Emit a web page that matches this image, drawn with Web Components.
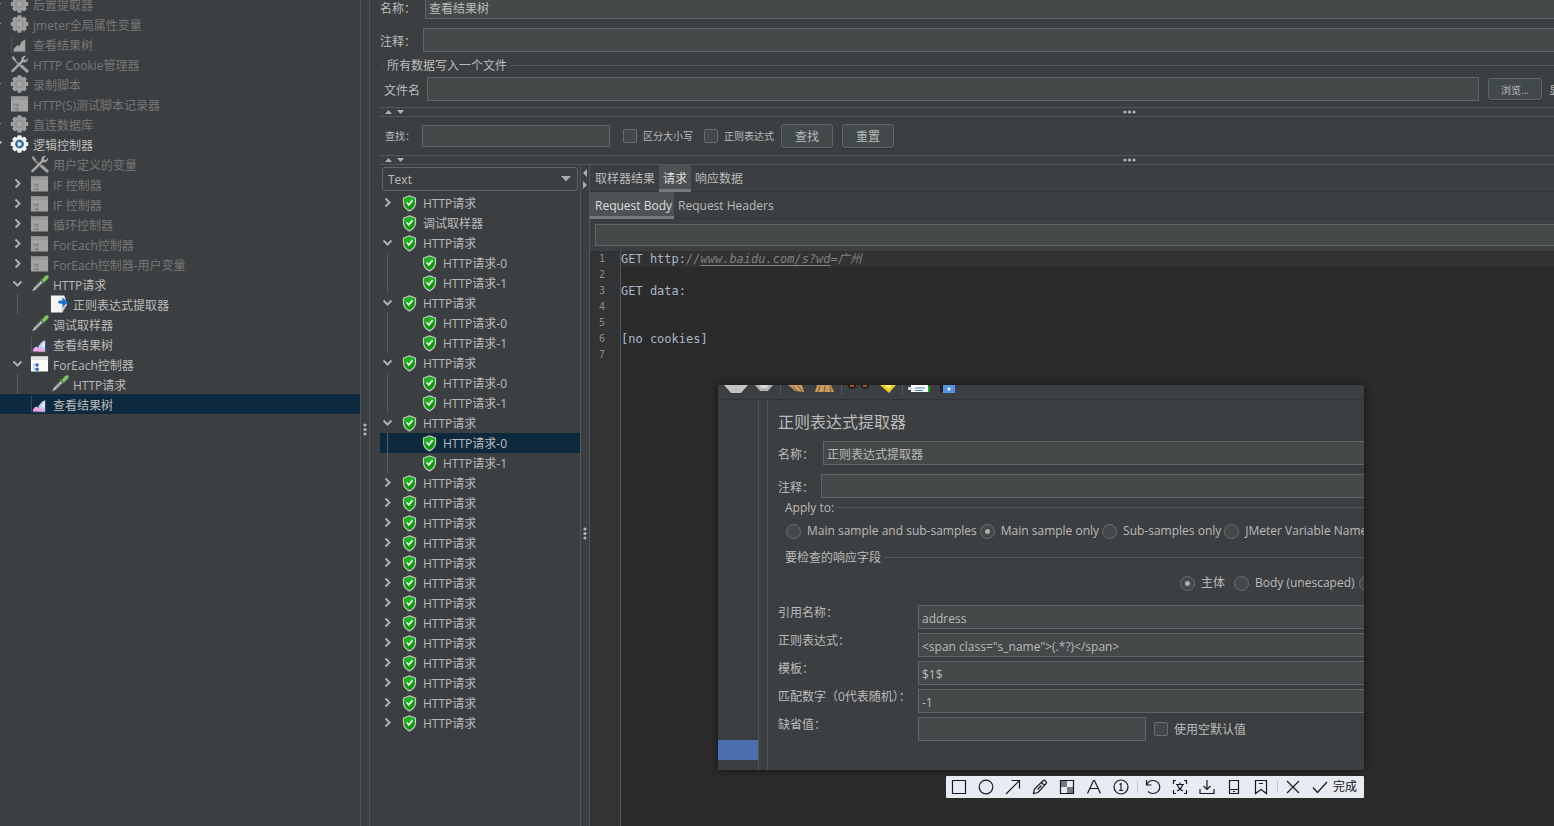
<!DOCTYPE html>
<html lang="zh-CN">
<head>
<meta charset="utf-8">
<title>查看结果树</title>
<style>
  html, body { margin: 0; height: 100%; overflow: hidden; background: #3c3f41; }
  body {
    font: 12px/16px "Open Sans", "Noto Sans CJK SC", sans-serif;
    color: #bbbbbb;
    --field: #45494a; --edge: #646464; --line: #555555; --select: #0d293e;
  }
</style>
</head>
<body>
<jm-app></jm-app>
<script>
const define = (name, render, after) => customElements.define(name, class extends HTMLElement {
  connectedCallback() {
    if (this.shadowRoot) return;
    const tpl = document.createElement('template');
    tpl.innerHTML = '<style>*{box-sizing:border-box}:host{box-sizing:border-box}</style>' + render(this);
    this.attachShadow({ mode: 'open' }).append(tpl.content.cloneNode(true));
    if (after) after(this);
  }
});

/* ---------- tree icons, 20 x 20 ---------- */
const teeth = c => [0, 45, 90, 135].map(a => `<rect x="7.8" y="0.8" width="4.4" height="18.4" rx="1" fill="${c}" transform="rotate(${a} 10 10)"/>`).join('');
const gear = (c, inner, core) => `${teeth(c)}<circle cx="10" cy="10" r="7.6" fill="${c}"/><circle cx="10" cy="10" r="4.6" fill="${inner}"/><circle cx="10" cy="10" r="3" fill="${core}"/>`;
const win = (c, bar, a, b) => `<rect x="1" y="2" width="18" height="16" rx="1" fill="${c}"/><rect x="1" y="2" width="18" height="4" fill="${bar}"/><path d="M4 9v7M4 10.500h3M4 15.500h3" stroke="${a}" fill="none" stroke-width=".8"/><circle cx="7.500" cy="11" r="1.900" fill="${b}"/><circle cx="7.500" cy="15.500" r="1.900" fill="${b}"/>`;
const ICONS = {
  gearOff: gear('#a0a0a0', '#8e8e8e', '#a8a8a8'),
  gear: gear('#eef2f6', '#2e5a96', '#5f8fc9') + '<path d="M8.500 7.500l4 2.500-4 2.500z" fill="#fff"/>',
  chartOff: '<path d="M1.500 2v16.500h16" stroke="#707070" stroke-dasharray="1 1" fill="none"/><path d="M4 18v-3l4-4 2 1 2-4 4-3v13z" fill="#a6a6a6"/>',
  chart: '<path d="M1.500 2v16.500h16" stroke="#70747a" stroke-dasharray="1 1" fill="none"/><path d="M9 12c2-2 3-5 7-6v12H9z" fill="#b8d2f6"/><path d="M12.500 12c1-2 2-3 2.500-4v6z" fill="#f4f8ff"/><path d="M3 18c0-3 2-5 4-5 2 0 2 3 4 2 2-1 4 0 5 3z" fill="#f3a6e4"/>',
  tools: '<path d="M3 4l11 11" stroke="#909090" stroke-width="1.800"/><path d="M1.500 2.500l2-1 3 4-1.500 1.500z" fill="#a0a0a0"/><path d="M12.500 12.500l5.500 5" stroke="#a0a0a0" stroke-width="3.200" stroke-linecap="round"/><path d="M14 6L2.500 17.500" stroke="#a8a8a8" stroke-width="2.500" stroke-linecap="round"/><path d="M17 1.500l-2.500 2.500.5 1.500 1.500.5L19 3.500c.4 3-1.500 5-4 4.800-2-.3-3.300-2-3-4C12.400 2.300 14.500 1 17 1.500z" fill="#a8a8a8"/>',
  winOff: win('#a4a4a4', '#999999', '#858585', '#858585'),
  win: win('#ffffff', '#e4e4e4', '#8aa8cc', '#2f70bd'),
  pipette: '<path d="M2 18l2-4 8-8 2 2-8 8z" fill="#e2e4e4" stroke="#565a5c" stroke-width=".8"/><path d="M5 15l6-6" stroke="#777"/><path d="M10.500 5l4.500 4.500" stroke="#47743c" stroke-width="2"/><path d="M12 6l3-3.500c1.500-1.600 3.600-2 4.300-1.200.8.900.2 2.600-1.300 4L15 8.500z" fill="#7fc364"/>',
  extract: '<path d="M1 1h14l3 9-5 9H1z" fill="#f4f4f4"/><path d="M18 11l-6 8 1-6z" fill="#c4c4c4"/><path d="M8 8c2-2 4-1.500 5-1.500V3l6 5.500-6 5V10c-2 0-3.500 0-5-2z" fill="#1c6fd0"/>',
  shield: '<path d="M10 2.500l6.300 2.500v5c0 4-3 6.500-6.300 8.300C6.700 16.500 3.700 14 3.700 10V5z" fill="#0a9a0a" stroke="#c3ccc3" stroke-width="1.300"/><path d="M10 3.500l5.300 2v4c-4 1-7 1-10.600.500v-4.500z" fill="#1fb31f"/><path d="M7 9.500l2.300 2.500L13.200 7" stroke="#fff" stroke-width="1.700" fill="none"/>'
};

define('jm-tree-row', el => {
  const level = +el.getAttribute('level') || 0, open = el.getAttribute('state');
  let cells = '';
  for (let i = 0; i < level; i++) cells += `<i class="cell">${i === level - 1 && el.hasAttribute('guide') ? '<svg width="15" height="20"><path d="M7.500 0v20" stroke="#5b5e60"/></svg>' : ''}</i>`;
  const chev = open === 'open' ? '<svg width="15" height="20"><path d="M3.500 7.500l4 4 4-4" fill="none" stroke="#adb0b2" stroke-width="2"/></svg>'
    : open === 'closed' ? '<svg width="15" height="20"><path d="M5.500 5.500l4 4-4 4" fill="none" stroke="#adb0b2" stroke-width="2"/></svg>' : '';
  return `<style>
    :host{display:block;height:20px;overflow:hidden}
    :host([selected]){background:var(--select)}
    :host([off]){color:#777777}
    div{display:flex;height:20px;margin-left:var(--tree-shift,0);white-space:nowrap;line-height:var(--tree-line,22px)}
    .cell{flex:0 0 20px}
    .icon{flex:0 0 19px;margin-right:4px}
    svg{display:block}
  </style><div>${cells}<i class="cell">${chev}</i><svg class="icon" width="19" height="20" viewBox="0 0 20 20">${ICONS[el.getAttribute('icon')]}</svg><slot></slot></div>`;
}, el => el.setAttribute('role', 'treeitem'));

const row = (text, icon, level, state = '', extra = '') =>
  `<jm-tree-row icon="${icon}" level="${level}" state="${state}" ${extra}>${text}</jm-tree-row>`;

define('jm-plan-tree', () => `<style>:host{display:block;flex:0 0 360px;overflow:hidden;--tree-shift:-10px;--tree-line:23px}
  .rows{margin-top:-6px}</style><div class="rows" role="tree" aria-label="测试计划">${[
  row('后置提取器', 'gearOff', 0, 'closed', 'off'),
  row('jmeter全局属性变量', 'gearOff', 0, 'closed', 'off'),
  row('查看结果树', 'chartOff', 0, '', 'off'),
  row('HTTP Cookie管理器', 'tools', 0, '', 'off'),
  row('录制脚本', 'gearOff', 0, 'closed', 'off'),
  row('HTTP(S)测试脚本记录器', 'winOff', 0, '', 'off'),
  row('直连数据库', 'gearOff', 0, 'closed', 'off'),
  row('逻辑控制器', 'gear', 0, 'open'),
  row('用户定义的变量', 'tools', 1, '', 'off'),
  row('IF 控制器', 'winOff', 1, 'closed', 'off'),
  row('IF 控制器', 'winOff', 1, 'closed', 'off'),
  row('循环控制器', 'winOff', 1, 'closed', 'off'),
  row('ForEach控制器', 'winOff', 1, 'closed', 'off'),
  row('ForEach控制器-用户变量', 'winOff', 1, 'closed', 'off'),
  row('HTTP请求', 'pipette', 1, 'open'),
  row('正则表达式提取器', 'extract', 2, '', 'guide'),
  row('调试取样器', 'pipette', 1),
  row('查看结果树', 'chart', 1),
  row('ForEach控制器', 'win', 1, 'open'),
  row('HTTP请求', 'pipette', 2, '', 'guide'),
  row('查看结果树', 'chart', 1, '', 'selected')
].join('')}</div>`);

define('jm-result-tree', () => {
  const H = 'HTTP请求';
  let rows = row(H, 'shield', 0, 'closed') + row('调试取样器', 'shield', 0);
  for (let g = 0; g < 4; g++)
    rows += row(H, 'shield', 0, 'open') + row(H + '-0', 'shield', 1, '', g === 3 ? 'guide selected' : 'guide') + row(H + '-1', 'shield', 1, '', 'guide');
  for (let g = 0; g < 13; g++) rows += row(H, 'shield', 0, 'closed');
  return `<style>
    :host{display:block;flex:0 0 200px;overflow:hidden}
    .pick{display:grid;margin:2px 2px}
    select{grid-area:1/1;height:24px;appearance:none;border:1px solid var(--edge);border-radius:3px;background:#3c3f41;color:inherit;font:inherit;padding:2px 5px 0;outline:0}
    svg{grid-area:1/1;justify-self:end;align-self:center;margin-right:7px;pointer-events:none}
  </style><div class="pick"><select aria-label="显示格式"><option>Text</option></select>
  <svg width="10" height="6"><path d="M0 0h10L5 5.500z" fill="#a9acae"/></svg></div>
  <div role="tree" aria-label="结果">${rows}</div>`;
});

/* ---------- split bars ---------- */
define('jm-vsplit', el => `<style>
  :host{display:flex;flex:0 0 10px;flex-direction:column;align-items:center;border:solid var(--line);border-width:0 1px}
  .dots{margin-top:var(--dots)}
  svg{display:block;flex:none}
  </style>${el.hasAttribute('arrows') ? '<svg width="8" height="24"><path d="M6 4v8L2 8z" fill="#b0b0b0"/><path d="M2 16v8l4-4z" fill="#b0b0b0"/></svg>' : ''}
  ${el.hasAttribute('plain') ? '' : '<svg class="dots" width="4" height="14" fill="#b4b4b4"><circle cx="2" cy="2" r="1.600"/><circle cx="2" cy="6.500" r="1.600"/><circle cx="2" cy="11" r="1.600"/></svg>'}`);

define('jm-hsplit', () => `<style>
  :host{display:flex;height:10px;align-items:center;justify-content:space-between;border:solid var(--line);border-width:1px 0;padding:0 418px 0 5px}
  svg{display:block}
  </style><svg width="20" height="6" fill="#b0b0b0"><path d="M0 5h7L3.500 1z"/><path d="M12 1h7l-3.500 4z"/></svg>
  <svg width="13" height="4" fill="#b4b4b4"><circle cx="2" cy="2" r="1.600"/><circle cx="6.500" cy="2" r="1.600"/><circle cx="11" cy="2" r="1.600"/></svg>`);

/* ---------- form controls ---------- */
define('jm-field', el => `<style>
  :host{display:flex;align-items:center;min-width:0}
  label{flex:0 0 var(--label,45px);padding-top:var(--drop,4px);white-space:nowrap}
  :host([top]) label{align-self:flex-start;padding-top:0}
  input{flex:1 1 0;min-width:0;width:0;height:var(--height,24px);margin:0;padding:2px 3px 0;border:1px solid var(--edge);background:var(--field);color:inherit;font:inherit;outline:0}
  :host([bleed]) input{border-right:0}
  </style>${el.getAttribute('label') ? `<label for="f">${el.getAttribute('label')}</label>` : ''}<input id="f" type="text">`,
  el => {
    const input = el.shadowRoot.querySelector('input');
    input.value = el.getAttribute('value') || '';
    if (!el.getAttribute('label')) input.setAttribute('aria-label', el.getAttribute('name'));
  });

define('jm-button', () => `<style>
  :host{display:block;flex:none}
  button{display:block;width:100%;height:var(--height,24px);padding:2px 0 0;border:1px solid var(--edge);border-radius:3px;background:#42494b;color:inherit;font:inherit;line-height:16px;box-shadow:0 1px 1px #2f3234}
  </style><button type="button"><slot></slot></button>`);

define('jm-check', () => `<style>
  :host{display:block;flex:none}
  label{display:flex;align-items:center;gap:6px;white-space:nowrap}
  input{appearance:none;width:14px;height:14px;margin:0;border:1px solid #6b6b6b;border-radius:2px;background:#43494a}
  span{padding-top:var(--drop,0)}
  </style><label><input type="checkbox"><span><slot></slot></span></label>`);

define('jm-radio', el => `<style>
  :host{display:block;flex:none}
  label{display:flex;align-items:center;gap:6px;white-space:nowrap}
  input{appearance:none;width:15px;height:15px;margin:0;border:1px solid #6b6e70;border-radius:50%;background:#43494a}
  input:checked{background:radial-gradient(circle,#adadad 0 2px,#43494a 3px)}
  </style><label><input type="radio" ${el.hasAttribute('checked') ? 'checked' : ''}><span><slot></slot></span></label>`);

define('jm-group', el => `<style>
  :host{display:block}
  fieldset{margin:0 0 0 2px;padding:0;border:0 solid var(--line);border-top-width:1px;min-width:0}
  legend{margin-left:2px;padding:1px 3px 0;height:16px}
  </style><fieldset><legend>${el.getAttribute('title-text')}</legend><slot></slot></fieldset>`);

/* ---------- tabs and code ---------- */
define('jm-tabs', el => `<style>
  :host{display:flex;height:27px;border-bottom:1px solid #323537;background:#3c3f41}
  button{height:27px;border:0;border-bottom:3px solid transparent;padding:4px var(--tab-end,4px) 0 4px;background:none;color:inherit;font:inherit;line-height:20px;white-space:nowrap}
  button:first-of-type{padding-left:5px}
  button[aria-selected=true]{background:#4e5254;border-color:#747a80;color:#dddddd}
  </style>${el.getAttribute('items').split('|').map((t, i) => `<button type="button" role="tab" aria-selected="${i === +el.getAttribute('active')}">${t}</button>`).join('')}`,
  el => el.setAttribute('role', 'tablist'));

define('jm-code', () => {
  const lines = ['GET http:<em>//<a href="#">www.baidu.com/s?wd</a>=广州</em>', '', 'GET data:', '', '', '[no cookies]', ''];
  return `<style>
  :host{display:flex;flex:1;min-height:0;background:#2b2b2b;color:#a9b7c6;font:12px/16px "DejaVu Sans Mono","Noto Sans CJK SC",monospace}
  .nums{flex:0 0 31px;background:#313335;border-right:1px solid var(--line);color:#8a8d8f;font-size:10px;padding-right:15px;text-align:right}
  .nums div,.text div{height:16px;line-height:16px}
  .text{flex:1;min-width:0;white-space:pre}
  .text div:first-child{background:#323232}
  em{color:#808080} a{color:inherit;text-decoration:underline;text-underline-offset:2px}
  </style><div class="nums">${lines.map((_, i) => `<div>${i + 1}</div>`).join('')}</div><div class="text">${lines.map(l => `<div>${l}</div>`).join('')}</div>`;
});

/* ---------- floating extractor capture ---------- */
define('jm-extractor', () => `<style>
  :host{display:flex;flex-direction:column;height:385px;background:#3c3f41;overflow:hidden;box-shadow:0 0 8px #151515;border-radius:0 2px 2px 0}
  .strip{flex:0 0 15px;border-bottom:1px solid #323537}
  .strip svg{display:block}
  .body{display:flex;flex:1;min-height:0}
  .side{flex:0 0 40px;padding-top:340px}
  .side i{display:block;height:20px;background:#4b6eaf}
  main{flex:1;min-width:0;padding-left:10px;overflow:hidden}
  h2{margin:0;height:41px;padding-top:10px;font-size:16px;font-weight:400;line-height:24px}
  .comment{margin-top:9px;--label:43px}
  .apply{margin-top:1px}
  .radios{display:flex;align-items:center;height:20px}
  .one{gap:3px;margin:6px 0 8px 6px}
  .two{gap:4px;margin:8px 0 12px 400px}
  .two jm-radio{min-width:50px}
  .rows{display:grid;gap:4px;--label:140px}
  .last{display:flex;gap:8px}
  .last jm-field{flex:0 0 368px}
  .last jm-check{padding-top:3px;--drop:2px}
  </style>
  <div class="strip"><svg width="260" height="14">
    <path d="M6 0h24l-7 8H13z" fill="#c2c2c2"/><path d="M37 0h18l-5 6h-8z" fill="#b4b4b4"/><path d="M42 0h8l-1 3h-6z" fill="#d8d8d8"/>
    <path d="M62.500 0v10M123.500 0v10M184.500 0v10" stroke="#55585a"/>
    <path d="M70 0h14l2 7-9-1-3-3z" fill="#c99a60"/><path d="M75 2l4 4M80 1l4 5" stroke="#7c552d"/>
    <path d="M99 0h14l3 7H97z" fill="#c99a60"/><path d="M102 1l-2 6M107 1l-1 6M112 1l1 6" stroke="#7c552d"/>
    <path d="M130 0h8c0 5-8 5-8 0zM143 0h8c0 5-8 5-8 0z" fill="#20140e"/><path d="M132 1h4M145 1h4" stroke="#a65422" stroke-width="2"/>
    <path d="M162 0h16l-7 8z" fill="#e9cf28"/><path d="M166 0h8l-3 4z" fill="#fff078"/>
    <path d="M193 0h17v7h-17z" fill="#fff"/><path d="M190 2h4v3h-4z" fill="#ddd"/><path d="M197 3h10M197 5.500h8" stroke="#367cc8"/><path d="M211 1v6" stroke="#19a719" stroke-width="2"/>
    <path d="M222 0h3v7h-3z" fill="#222"/><path d="M225 0h12v8h-12z" fill="#5793e7"/><circle cx="231" cy="4" r="1.500" fill="#fff"/>
  </svg></div>
  <div class="body"><div class="side"><i></i></div><jm-vsplit plain></jm-vsplit><main>
    <h2>正则表达式提取器</h2>
    <jm-field bleed label="名称：" value="正则表达式提取器"></jm-field>
    <jm-field bleed class="comment" label="注释："></jm-field>
    <jm-group class="apply" title-text="Apply to:"><div class="radios one">
      <jm-radio>Main sample and sub-samples</jm-radio><jm-radio checked>Main sample only</jm-radio><jm-radio>Sub-samples only</jm-radio><jm-radio>JMeter Variable Name to use</jm-radio></div></jm-group>
    <jm-group title-text="要检查的响应字段"><div class="radios two">
      <jm-radio checked>主体</jm-radio><jm-radio>Body (unescaped)</jm-radio><jm-radio></jm-radio></div></jm-group>
    <div class="rows">
      <jm-field top bleed label="引用名称：" value="address"></jm-field>
      <jm-field top bleed label="正则表达式：" value='&lt;span class=&quot;s_name&quot;&gt;(.*?)&lt;/span&gt;'></jm-field>
      <jm-field top bleed label="模板：" value="$1$"></jm-field>
      <jm-field top bleed label="匹配数字（0代表随机）：" value="-1"></jm-field>
      <div class="last"><jm-field top label="缺省值："></jm-field><jm-check>使用空默认值</jm-check></div>
    </div>
  </main></div>`);

const TOOLS = [
  ['矩形', '<path d="M3.500 3.500h13v13h-13z"/>'],
  ['椭圆', '<circle cx="10" cy="10" r="6.800"/>'],
  ['箭头', '<path d="M3 17L16.500 3.500M8.500 3.500h8v8"/>'],
  ['画笔', '<path d="M3.500 16.500l1-4.500 8.800-8.500c1.500-1 4 1.500 3 3L8 15.500zM11.500 5.500l3 3M7.500 12.500l4-4"/>'],
  ['马赛克', '<path d="M4 4h6v6H4zM10 10h6v6h-6z" fill="#747887" stroke="none"/><path d="M3.500 3.500h13v13h-13z"/>'],
  ['文字', '<path d="M3.500 16.500L9.500 3.500h1l6 13M6 11.500h8"/>'],
  ['序号', '<circle cx="10" cy="10" r="7"/><path d="M8.500 7.500l1.500-1v7M8 13.500h4"/>'],
  null,
  ['撤销', '<path d="M3.500 3v5h5M4 7.500c1-2.500 3.500-4 6-4 3.800 0 6.800 3 6.800 6.500S13.800 16.500 10 16.500c-2 0-3.500-.6-5-2"/>'],
  ['翻译', '<path d="M3.500 7V3.500H6M14 3.500h2.500V7M3.500 13v3.500H6M14 16.500h2.500V13M6 7.500h8M10 5.500v2M7.500 8c1 3 3 5 5.500 6M12.500 8c-1 3-3 5-5.500 6"/>'],
  ['保存', '<path d="M10 3v9M6.500 9l3.500 3.500L13.500 9M3 12v4.500h14V12"/>'],
  ['手机', '<path d="M5.500 3.500h9v13h-9zM5.500 12.500h9M9 14.500h2"/>'],
  ['收藏', '<path d="M4.500 3.500h11v13L10 12.500l-5.500 4zM8 6.500h4"/>'],
  null,
  ['关闭', '<path d="M4 4l12 12M16 4L4 16"/>']
];
define('jm-capture-bar', () => `<style>
  :host{display:flex;height:22px;background:#e8ebf1;color:#111122;border-radius:1px}
  button{flex:0 0 27px;height:22px;padding:0;border:0;background:none;color:inherit;font:inherit}
  svg{display:block;flex:none;margin:0 3px;fill:none;stroke:#16182a;stroke-width:1.200}
  i{flex:0 0 5px;margin:5px 0;background:linear-gradient(#c2c5cb,#c2c5cb) center/1px 100% no-repeat}
  .done{display:flex;flex:1;align-items:center;padding:0 3px;white-space:nowrap}
  .done svg{margin:0 3px 0 0}
  </style>${TOOLS.map(t => t ? `<button type="button" aria-label="${t[0]}"><svg width="20" height="22" viewBox="0 -1 20 22">${t[1]}</svg></button>` : '<i></i>').join('')}
  <button type="button" class="done"><svg width="20" height="22" viewBox="0 -1 20 22"><path d="M3 10.500l4.500 5L17 5"/></svg>完成</button>`);

/* ---------- right-hand panel ---------- */
define('jm-listener', () => `<style>
  :host{display:flex;flex:1;min-width:0;flex-direction:column;padding-left:10px;overflow:hidden}
  .head{margin-top:-5px;padding-bottom:6px}
  .comment{margin-top:9px;--label:43px}
  jm-group{margin-top:5px}
  .file{display:flex;align-items:center;margin:4px 0 0 2px;white-space:nowrap}
  .file jm-field{flex:1;--label:43px}
  .file jm-button{width:54px;margin:0 7px 0 9px;--height:22px;font-size:10px}
  .file span{flex:0 0 5px;overflow:hidden;padding-top:4px}
  .search{display:flex;align-items:center;height:38px;padding-left:5px;font-size:10px}
  .search jm-field{flex:0 0 225px;margin-right:13px;--label:37px;--height:22px;--drop:0}
  .search jm-check{margin-right:11px}
  .search jm-check + jm-check{margin-right:7px}
  .search jm-button{width:52px;margin-right:9px;font-size:12px}
  .results{display:flex;flex:1;min-height:0}
  .view{display:flex;flex:1;flex-direction:column;min-width:0}
  .sub{--tab-end:2px}
  .find{margin:5px 0 5px 5px;--height:22px}
  </style>
  <div class="head">
    <jm-field bleed label="名称：" value="查看结果树"></jm-field>
    <jm-field bleed class="comment" label="注释："></jm-field>
    <jm-group title-text="所有数据写入一个文件"><div class="file"><jm-field label="文件名"></jm-field><jm-button>浏览...</jm-button><span>显</span></div></jm-group>
  </div>
  <jm-hsplit></jm-hsplit>
  <div class="search"><jm-field label="查找："></jm-field><jm-check>区分大小写</jm-check><jm-check>正则表达式</jm-check><jm-button>查找</jm-button><jm-button>重置</jm-button></div>
  <jm-hsplit></jm-hsplit>
  <div class="results"><jm-result-tree></jm-result-tree><jm-vsplit arrows style="--dots:338px"></jm-vsplit>
    <div class="view"><jm-tabs items="取样器结果|请求|响应数据" active="1"></jm-tabs>
      <jm-tabs class="sub" items="Request Body|Request Headers" active="0"></jm-tabs>
      <jm-field bleed class="find" name="查找内容"></jm-field><jm-code></jm-code></div></div>`);

define('jm-app', () => `<style>
  :host{display:flex;height:100vh;overflow:hidden;position:relative}
  .overlay{position:absolute;left:718px;top:385px;width:646px;display:flex;flex-direction:column;gap:6px}
  jm-capture-bar{align-self:flex-end;width:418px}
  </style><jm-plan-tree></jm-plan-tree><jm-vsplit style="--dots:423px"></jm-vsplit><jm-listener></jm-listener>
  <div class="overlay"><jm-extractor></jm-extractor><jm-capture-bar></jm-capture-bar></div>`);
</script>
</body>
</html>
